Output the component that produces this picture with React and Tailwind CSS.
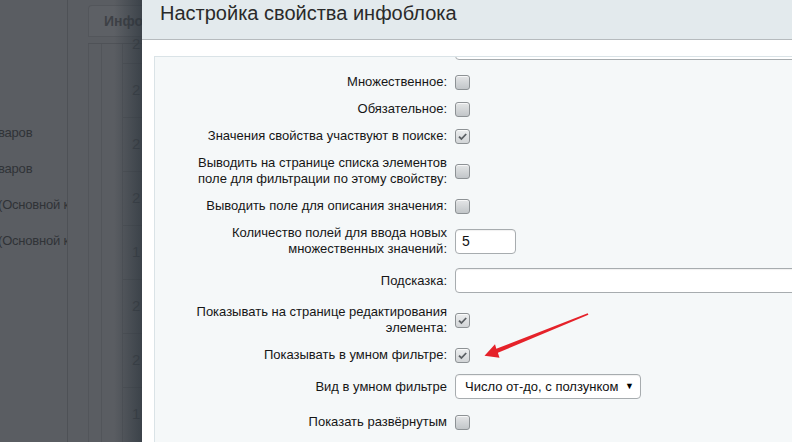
import React from "react";

const font = { fontFamily: '"Liberation Sans", Arial, sans-serif' };

function Checkbox({ checked }) {
  return (
    <span
      className={
        "inline-flex items-center justify-center w-[15px] h-[15px] rounded-[3px] border border-[#8d9295] shadow-[inset_0_1px_0_rgba(255,255,255,0.7)] " +
        (checked
          ? "bg-gradient-to-b from-[#eceeef] to-[#d2d5d7]"
          : "bg-gradient-to-b from-[#e4e6e7] to-[#c2c6c9]")
      }
    >
      {checked && (
        <svg width="11" height="11" viewBox="0 0 11 11">
          <path d="M2 5.6 L4.4 8 L9.2 3" fill="none" stroke="#5a5f63" strokeWidth="1.8" />
        </svg>
      )}
    </span>
  );
}

function TextBox({ className, children }) {
  return (
    <div
      className={
        "h-[25px] rounded-[4px] border border-[#a7acaf] bg-white shadow-[inset_0_1px_1px_rgba(0,0,0,0.06)] flex items-center " +
        className
      }
    >
      {children}
    </div>
  );
}

const rows = [
  { label: "Множественное:", ctl: "cb" },
  { label: "Обязательное:", ctl: "cb" },
  { label: "Значения свойства участвуют в поиске:", ctl: "cbc" },
  { label: "Выводить на странице списка элементов поле для фильтрации по этому свойству:", ctl: "cb" },
  { label: "Выводить поле для описания значения:", ctl: "cb" },
  { label: "Количество полей для ввода новых множественных значений:", ctl: "num" },
  { label: "Подсказка:", ctl: "text" },
  { label: "Показывать на странице редактирования элемента:", ctl: "cbc" },
  { label: "Показывать в умном фильтре:", ctl: "cbc" },
  { label: "Вид в умном фильтре", ctl: "select", extra: "pb-[9.5px]" },
  { label: "Показать развёрнутым", ctl: "cb" },
];

function Control({ type }) {
  if (type === "cb") return <Checkbox />;
  if (type === "cbc") return <Checkbox checked />;
  if (type === "num")
    return (
      <TextBox className="w-[61px] pl-[6px] text-[14px] text-[#111]">5</TextBox>
    );
  if (type === "text") return <TextBox className="w-[400px]" />;
  return (
    <TextBox className="w-[186px] pl-[9px] pr-[6px] justify-between text-[13px] text-[#111]">
      <span>Число от-до, с ползунком</span>
      <span className="text-[9px] text-black">▼</span>
    </TextBox>
  );
}

export default function App() {
  const tableRows = ["2", "2", "2", "1", "2", "2", "1"];
  return (
    <div className="relative w-[792px] h-[442px] overflow-hidden flex bg-white" style={font}>
      {/* dimmed page behind the dialog */}
      <div className="relative w-[142px] shrink-0 h-full bg-[#5a5d62] flex overflow-hidden">
        <div className="w-[68px] shrink-0 h-full border-r border-[#4e5156] pt-[115px] flex flex-col overflow-hidden">
          {["варов", "варов", "(Основной к", "(Основной к"].map((t, i) => (
            <div key={i} className="h-[36px] -ml-[2px] flex items-center whitespace-nowrap text-[13px] tracking-[-0.2px] text-[#303337]">
              {t}
            </div>
          ))}
        </div>
        <div className="flex-1 pl-[20px] flex flex-col">
          <div className="mt-[5px] h-[32px] rounded-tl-[4px] border-l border-t border-b border-[#53565b] bg-[#5d6065] flex items-center pl-[15px] text-[14px] font-bold text-[#3d4045]">
            Инфо
          </div>
          <div className="mt-[6px] flex-1 border-t border-[#4f5257] flex">
            <div className="w-[13px] border-l border-[#52555a]" />
            <div className="w-[21px] border-l border-[#52555a]" />
            <div className="flex-1 border-l border-[#52555a] flex flex-col text-[15px] text-[#45484d]">
              <div className="h-[27px] overflow-hidden pl-[9px] leading-[16px] -mt-[8px]">2</div>
              {tableRows.map((n, i) => (
                <div key={i} className="h-[54px] shrink-0 border-t border-[#52555a] flex items-center pl-[9px]">
                  {n}
                </div>
              ))}
            </div>
          </div>
        </div>
        {/* dialog shadow */}
        <div className="absolute right-0 top-0 h-full w-[28px] bg-gradient-to-r from-transparent to-[#2b343c]/65" />
      </div>

      {/* dialog */}
      <div className="flex-1 h-full flex flex-col bg-white">
        <div className="h-[40px] shrink-0 bg-[#e3eaed] border-b border-[#b6bbbe] pl-[18px] text-[20px] leading-[26px] text-[#2a2a2a]">
          Настройка свойства инфоблока
        </div>
        <div className="flex-1 pt-[16px] pl-[12px] flex flex-col min-h-0">
          <div className="flex-1 border-l border-t border-[#dae3e7] bg-[#f5f8f9] overflow-hidden text-[13px] text-[#161616]">
            <div className="h-[11.5px] overflow-hidden flex">
              <div className="w-[300px] shrink-0" />
              <TextBox className="w-[400px] -mt-[22px] shrink-0" />
            </div>
            {rows.map((r, i) => (
              <div key={i} className={"flex items-center pt-[5.5px] " + (r.extra || "pb-[5.5px]")}>
                <div className="w-[300px] shrink-0 pl-[38px] pr-[8px] text-right leading-[16px]">
                  {r.label}
                </div>
                <div className="flex-1 flex items-center">
                  <Control type={r.ctl} />
                </div>
              </div>
            ))}
          </div>
        </div>
      </div>

      {/* red pointer arrow */}
      <svg className="absolute left-0 top-0 pointer-events-none" width="792" height="442" viewBox="0 0 792 442">
        <polygon
          points="587.7,313.2 496.3,348.7 495,344.3 484.5,355.8 499.5,357.8 497.9,352.8 588.4,314.8"
          fill="#e5222a"
        />
      </svg>
    </div>
  );
}
